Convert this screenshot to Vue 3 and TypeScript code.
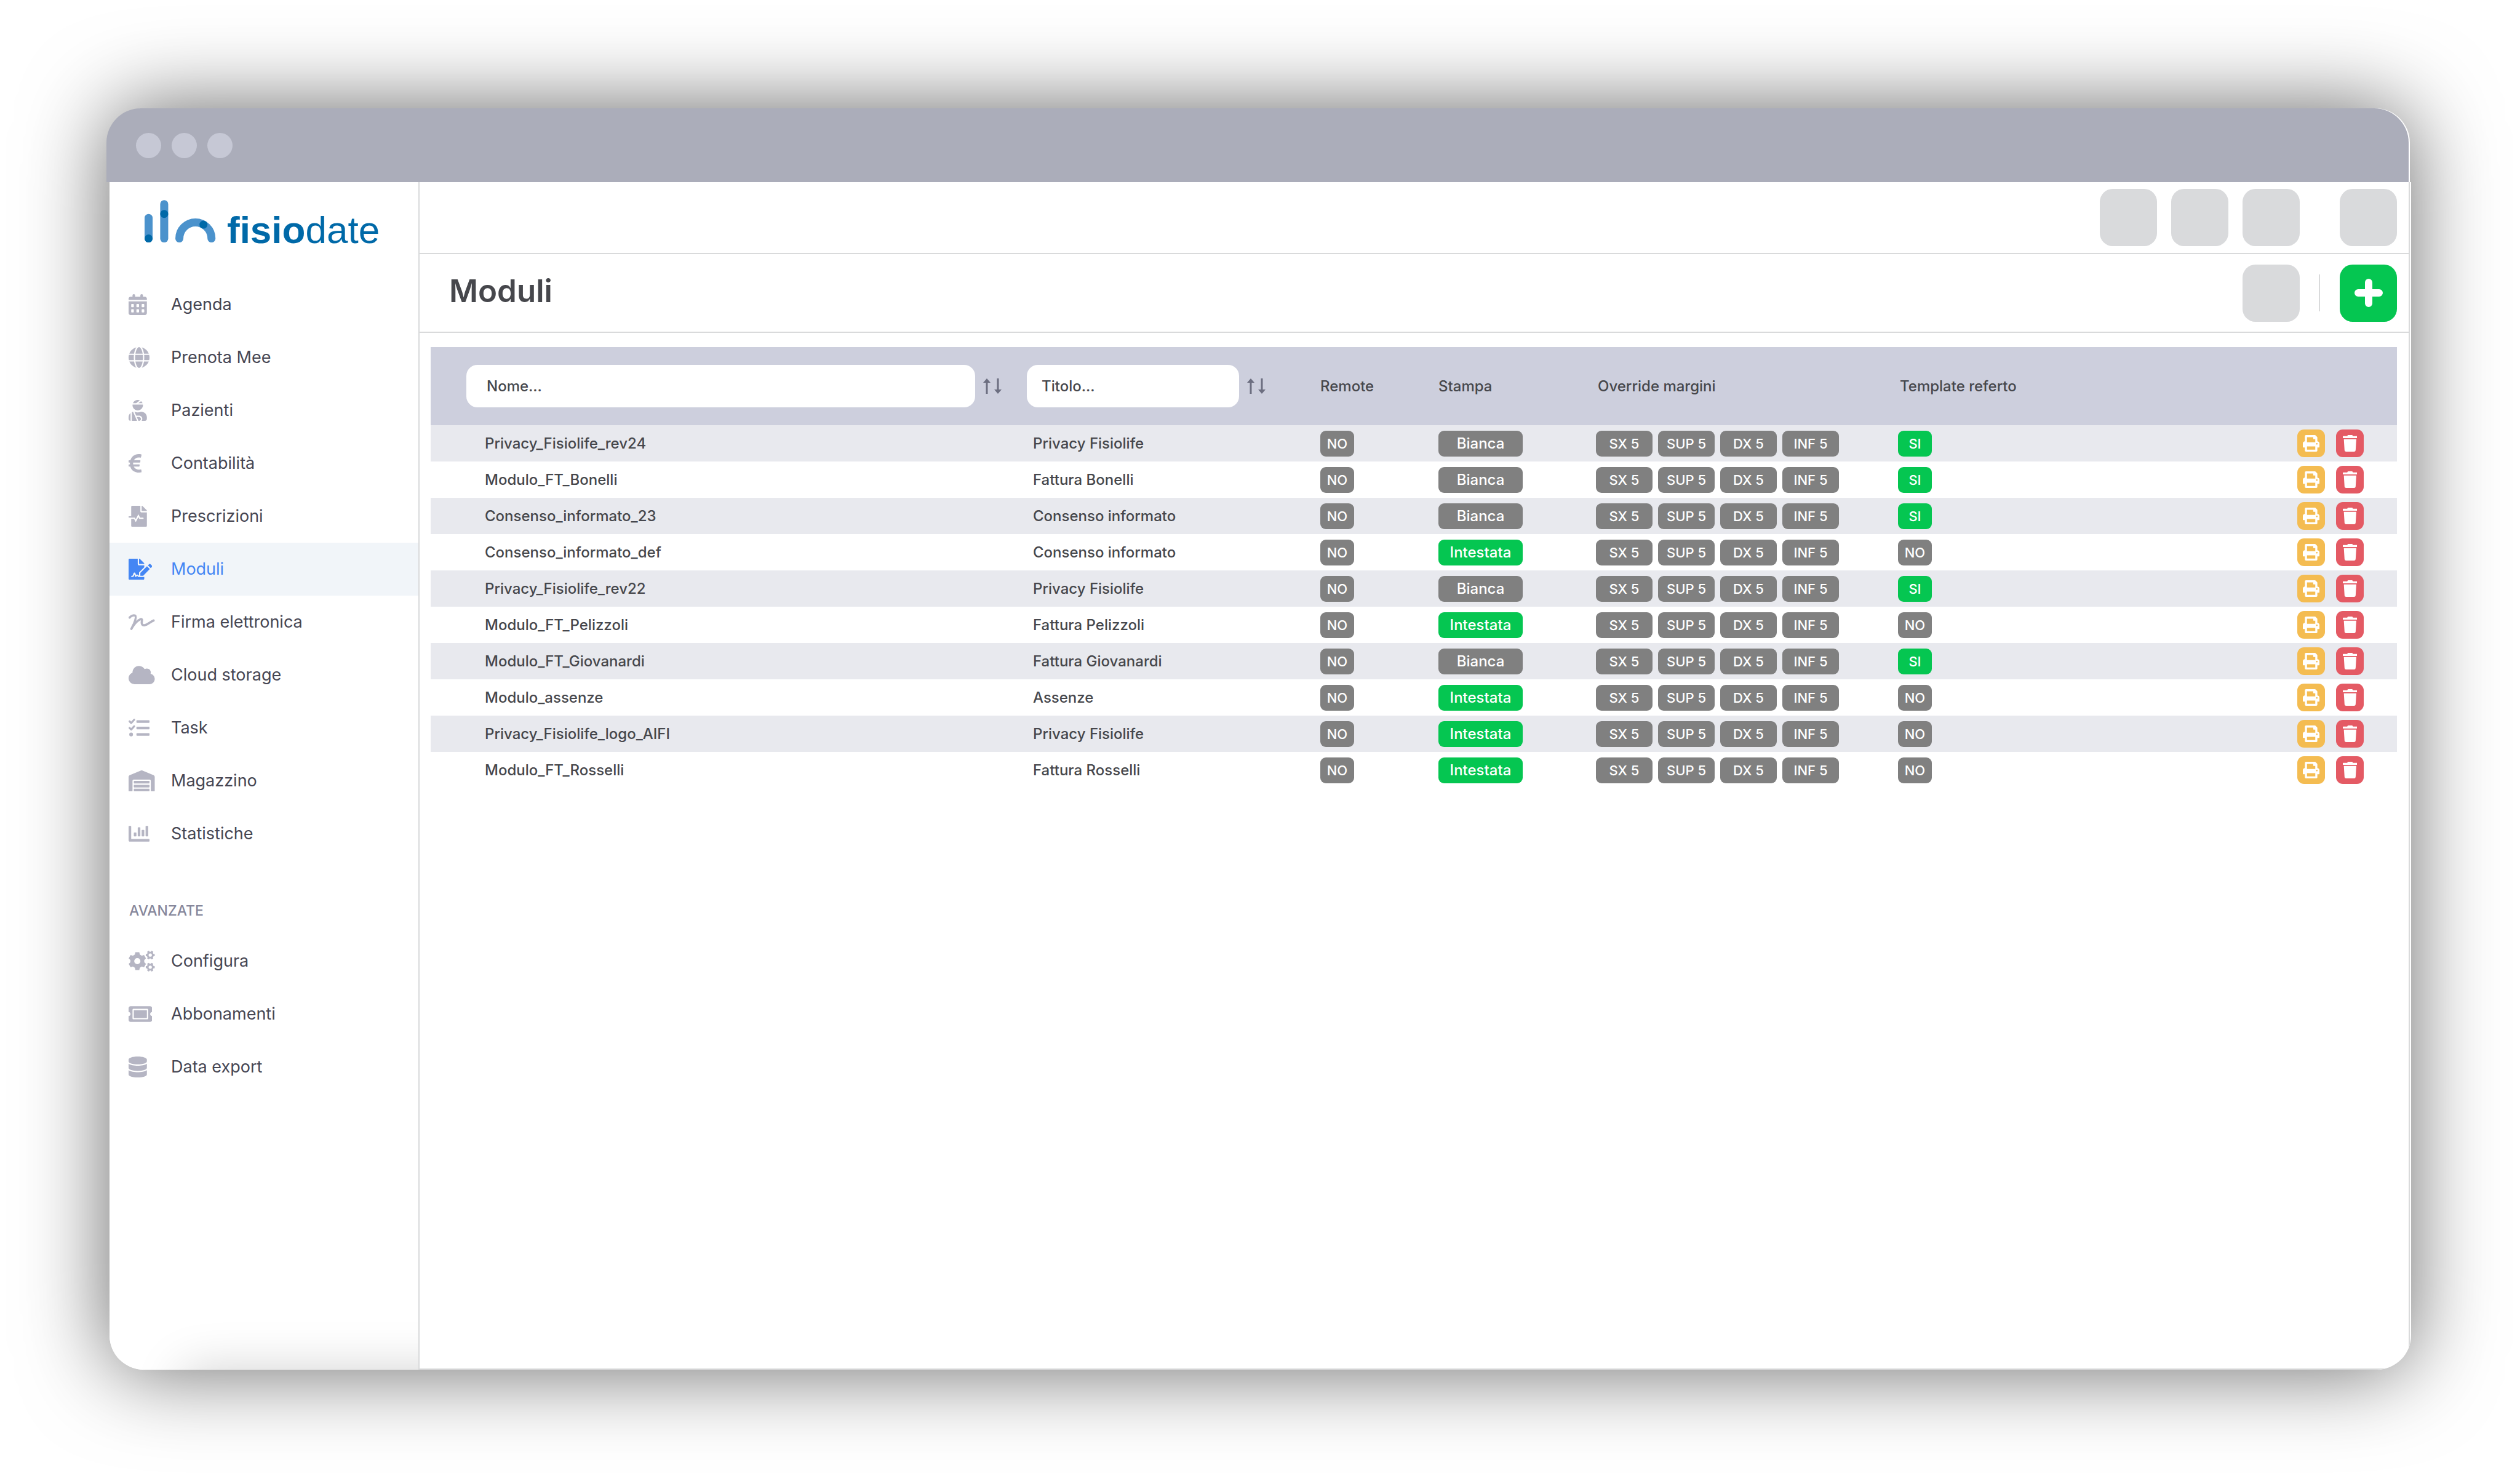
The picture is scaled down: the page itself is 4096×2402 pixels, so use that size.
<script setup lang="ts">
import { ref } from 'vue'

interface Icon {
  width: number
  path: string
  stroked?: boolean
}

interface NavItem {
  label: string
  icon: Icon
}

interface Modulo {
  nome: string
  titolo: string
  intestata: boolean
  referto: boolean
}

/** Outline of a six-toothed gear with a round hole. */
function gear(cx: number, cy: number, outer: number, inner: number, hole: number, turn: number): string {
  const points: string[] = []
  const step = Math.PI / 3
  for (let i = 0; i < 6; i++) {
    const a = turn + i * step
    const corners: [number, number][] = [
      [inner, -0.36],
      [outer, -0.22],
      [outer, 0.22],
      [inner, 0.36],
    ]
    for (const [r, d] of corners) {
      points.push(`${(cx + r * Math.cos(a + d)).toFixed(1)} ${(cy + r * Math.sin(a + d)).toFixed(1)}`)
    }
  }
  return `M${points.join('L')}ZM${cx - hole} ${cy}a${hole} ${hole} 0 1 0 ${hole * 2} 0a${hole} ${hole} 0 1 0 ${-hole * 2} 0Z`
}

const navItems: NavItem[] = [
  {
    label: 'Agenda',
    icon: {
      width: 448,
      path: 'M128 0c17.7 0 32 14.3 32 32V64H288V32c0-17.7 14.3-32 32-32s32 14.3 32 32V64h48c26.5 0 48 21.5 48 48v32H0V112C0 85.5 21.5 64 48 64H96V32c0-17.7 14.3-32 32-32zM0 176H448V464c0 26.5-21.5 48-48 48H48c-26.5 0-48-21.5-48-48V176zM64 256v48c0 8.8 7.2 16 16 16h32c8.8 0 16-7.2 16-16V256c0-8.8-7.2-16-16-16H80c-8.8 0-16 7.2-16 16zm128 0v48c0 8.8 7.2 16 16 16h32c8.8 0 16-7.2 16-16V256c0-8.8-7.2-16-16-16H208c-8.8 0-16 7.2-16 16zm128 0v48c0 8.8 7.2 16 16 16h32c8.8 0 16-7.2 16-16V256c0-8.8-7.2-16-16-16H336c-8.8 0-16 7.2-16 16zM64 384v48c0 8.8 7.2 16 16 16h32c8.8 0 16-7.2 16-16V384c0-8.8-7.2-16-16-16H80c-8.8 0-16 7.2-16 16zm128 0v48c0 8.8 7.2 16 16 16h32c8.8 0 16-7.2 16-16V384c0-8.8-7.2-16-16-16H208c-8.8 0-16 7.2-16 16zm128 0v48c0 8.8 7.2 16 16 16h32c8.8 0 16-7.2 16-16V384c0-8.8-7.2-16-16-16H336c-8.8 0-16 7.2-16 16z',
    },
  },
  {
    label: 'Prenota Mee',
    icon: {
      width: 512,
      path: 'M352 256c0 22.2-1.2 43.6-3.3 64H163.3c-2.2-20.4-3.3-41.8-3.3-64s1.2-43.6 3.3-64H348.7c2.2 20.4 3.3 41.8 3.3 64zm28.8-64H503.9c5.3 20.5 8.1 41.9 8.1 64s-2.8 43.5-8.1 64H380.8c2.1-20.6 3.2-42 3.2-64s-1.1-43.4-3.2-64zm112.6-32H376.7c-10-63.9-29.8-117.4-55.3-151.6c78.3 20.7 142 77.5 171.9 151.6zm-149.1 0H167.7c6.1-36.4 15.5-68.6 27-94.7c10.5-23.6 22.2-40.7 33.5-51.5C239.4 3.2 248.7 0 256 0s16.6 3.2 27.8 13.8c11.3 10.8 23 27.9 33.5 51.5c11.6 26 20.9 58.2 27 94.7zm-209 0H18.6C48.6 85.9 112.2 29.1 190.6 8.4C165.1 42.6 145.3 96.1 135.3 160zM8.1 192H131.2c-2.1 20.6-3.2 42-3.2 64s1.1 43.4 3.2 64H8.1C2.8 299.5 0 278.1 0 256s2.8-43.5 8.1-64zM194.7 446.6c-11.6-26-20.9-58.2-27-94.6H344.3c-6.1 36.4-15.5 68.6-27 94.6c-10.5 23.6-22.2 40.7-33.5 51.5C272.6 508.8 263.3 512 256 512s-16.6-3.2-27.8-13.8c-11.3-10.8-23-27.9-33.5-51.5zM135.3 352c10 63.9 29.8 117.4 55.3 151.6C112.2 482.9 48.6 426.1 18.6 352H135.3zm358.1 0c-30 74.1-93.6 130.9-171.9 151.6c25.5-34.2 45.2-87.7 55.3-151.6H493.4z',
    },
  },
  {
    label: 'Pazienti',
    icon: {
      width: 448,
      path: 'M277.37 11.98C261.08 4.47 243.11 0 224 0c-53.69 0-99.5 33.13-118.51 80h81.19l90.69-68.02zM342.51 80c-7.9-19.47-20.67-36.2-36.49-49.52L239.99 80h102.52zM224 256c70.69 0 128-57.31 128-128 0-5.48-.95-10.7-1.61-16H97.61c-.67 5.3-1.61 10.52-1.61 16 0 70.69 57.31 128 128 128zM80 299.7V512h128.26l-98.45-221.52A132.835 132.835 0 0 0 80 299.7zM0 464c0 26.51 21.49 48 48 48V320.24C18.88 344.89 0 381.26 0 422.4V464zm256-48h-55.38l42.67 96H256c26.47 0 48-21.53 48-48s-21.53-48-48-48zm57.6-128h-16.71c-22.24 10.18-46.88 16-72.89 16s-50.65-5.82-72.89-16h-7.37l42.67 96H256c44.11 0 80 35.89 80 80 0 18.08-6.26 34.59-16.41 48H400c26.51 0 48-21.49 48-48v-41.6c0-74.23-60.17-134.4-134.4-134.4z',
    },
  },
  {
    label: 'Contabilità',
    icon: {
      width: 320,
      path: 'M310.7 413.8c-1.3-6.3-7.6-10.3-13.8-8.8-11.5 2.7-29.4 5.9-48 5.9-56.6 0-101.5-30.4-122.3-74.9h126.2c5.6 0 10.5-3.9 11.7-9.4l6.6-30c1.7-7.5-4-14.6-11.7-14.6H112.2c-1-15.3-1-30.5 0-44h160.2c5.6 0 10.5-3.9 11.7-9.4l7-32c1.6-7.5-4.1-14.6-11.7-14.6H129.4c22.2-40.9 64.3-69.6 118.2-69.6 14.9 0 31.6 2.3 41.5 4.3 6.2 1.2 12.3-2.6 13.9-8.7l14.8-56.7c1.7-6.6-2.5-13.2-9.2-14.5-14.3-2.7-37.8-5.8-62.5-5.8C148.5 30 70.3 93 43.9 182H12c-6.6 0-12 5.4-12 12v32c0 6.6 5.4 12 12 12h21.5c-1.1 14.2-1.1 29.8 0 44H12c-6.6 0-12 5.4-12 12v30c0 6.6 5.4 12 12 12h29.1C63.5 421.6 141.1 482 246.1 482c28.4 0 52.6-4.5 66.3-7.8 6.3-1.5 10.3-7.8 8.9-14.1z',
    },
  },
  {
    label: 'Prescrizioni',
    icon: {
      width: 448,
      path: 'M288 136V0H88C74.7 0 64 10.7 64 24v232H8c-4.4 0-8 3.6-8 8v16c0 4.4 3.6 8 8 8h140.9c3 0 5.8 1.7 7.2 4.4l19.9 39.8 56.8-113.7c2.9-5.9 11.4-5.9 14.3 0l34.7 69.5H352c8.8 0 16 7.2 16 16s-7.2 16-16 16h-89.9L240 275.8l-56.8 113.7c-2.9 5.9-11.4 5.9-14.3 0L134.1 320H64v168c0 13.3 10.7 24 24 24h336c13.3 0 24-10.7 24-24V160H312c-13.2 0-24-10.8-24-24zm153-31L343.1 7c-4.5-4.5-10.6-7-17-7H320v128h128v-6.1c0-6.3-2.5-12.4-7-16.9z',
    },
  },
  {
    label: 'Moduli',
    icon: {
      width: 576,
      path: 'M218.17 424.14c-2.95-5.92-8.09-6.52-10.17-6.52s-7.22.59-10.02 6.19l-7.67 15.34c-6.37 12.78-25.03 11.37-29.48-2.09L144 386.59l-10.61 31.88c-5.89 17.66-22.38 29.53-41 29.53H80c-8.84 0-16-7.16-16-16s7.16-16 16-16h12.39c4.83 0 9.11-3.08 10.64-7.66l18.19-54.64c3.3-9.81 12.44-16.41 22.78-16.41s19.48 6.59 22.77 16.41l13.88 41.64c19.75-16.19 54.06-9.7 66 14.16 1.89 3.78 5.49 5.95 9.36 6.26v-82.12l128-127.09V160H248c-13.2 0-24-10.8-24-24V0H24C10.7 0 0 10.7 0 24v464c0 13.3 10.7 24 24 24h336c13.3 0 24-10.7 24-24v-40l-128-.11c-16.12-.31-30.58-9.28-37.83-23.75zM384 121.9c0-6.3-2.5-12.4-7-16.9L279.1 7c-4.5-4.5-10.6-7-17-7H256v128h128v-6.1zm-96 225.06V416h68.99l161.68-162.78-67.88-67.88L288 346.96zm280.54-179.63l-31.87-31.87c-9.94-9.94-26.07-9.94-36.01 0l-27.25 27.25 67.88 67.88 27.25-27.25c9.95-9.94 9.95-26.07 0-36.01z',
    },
  },
  {
    label: 'Firma elettronica',
    icon: {
      width: 640,
      stroked: true,
      path: 'M24 146C60 105 120 80 158 96C190 112 172 190 134 290L68 422C120 330 210 220 290 185C330 170 332 195 324 240C312 310 340 345 400 330C470 315 530 250 612 218',
    },
  },
  {
    label: 'Cloud storage',
    icon: {
      width: 640,
      path: 'M537.6 226.6c4.1-10.7 6.4-22.4 6.4-34.6 0-53-43-96-96-96-19.7 0-38.1 6-53.3 16.2C367 64.2 315.3 32 256 32c-88.4 0-160 71.6-160 160 0 2.7.1 5.4.2 8.1C40.2 219.8 0 273.2 0 336c0 79.5 64.5 144 144 144h368c70.7 0 128-57.3 128-128 0-61.9-44-113.6-102.4-125.4z',
    },
  },
  {
    label: 'Task',
    icon: {
      width: 512,
      path: 'M152.1 38.2c9.9 8.9 10.7 24 1.8 33.9l-72 80c-4.4 4.9-10.6 7.8-17.2 7.9s-12.9-2.4-17.6-7L7 113C-2.3 103.6-2.3 88.4 7 79s24.6-9.4 33.9 0l22.1 22.1 55.1-61.2c8.9-9.9 24-10.7 33.9-1.8zm0 160c9.9 8.9 10.7 24 1.8 33.9l-72 80c-4.4 4.9-10.6 7.8-17.2 7.9s-12.9-2.4-17.6-7L7 273c-9.4-9.4-9.4-24.6 0-33.9s24.6-9.4 33.9 0l22.1 22.1 55.1-61.2c8.9-9.9 24-10.7 33.9-1.8zM208 68h288a16 16 0 0 1 16 16v32a16 16 0 0 1-16 16H208a16 16 0 0 1-16-16V84a16 16 0 0 1 16-16zM208 226h288a16 16 0 0 1 16 16v32a16 16 0 0 1-16 16H208a16 16 0 0 1-16-16v-32a16 16 0 0 1 16-16zM208 384h288a16 16 0 0 1 16 16v32a16 16 0 0 1-16 16H208a16 16 0 0 1-16-16v-32a16 16 0 0 1 16-16zM16 416a46 46 0 1 0 92 0a46 46 0 1 0-92 0z',
    },
  },
  {
    label: 'Magazzino',
    icon: {
      width: 640,
      path: 'M504 352H136.4c-4.4 0-8 3.6-8 8l-.1 48c0 4.4 3.6 8 8 8H504c4.4 0 8-3.6 8-8v-48c0-4.4-3.6-8-8-8zm0 96H136.1c-4.4 0-8 3.6-8 8l-.1 48c0 4.4 3.6 8 8 8h368c4.4 0 8-3.6 8-8v-48c0-4.4-3.6-8-8-8zm0-192H136.6c-4.4 0-8 3.6-8 8l-.1 48c0 4.4 3.6 8 8 8H504c4.4 0 8-3.6 8-8v-48c0-4.4-3.6-8-8-8zm106.5-139L338.4 3.7a48.15 48.15 0 0 0-36.9 0L29.5 117C11.7 124.5 0 141.9 0 161.3V504c0 4.4 3.6 8 8 8h80c4.4 0 8-3.6 8-8V256c0-17.6 14.6-32 32.6-32h382.8c18 0 32.6 14.4 32.6 32v248c0 4.4 3.6 8 8 8h80c4.4 0 8-3.6 8-8V161.3c0-19.4-11.7-36.8-29.5-44.3z',
    },
  },
  {
    label: 'Statistiche',
    icon: {
      width: 512,
      path: 'M332.8 320h38.4c6.4 0 12.8-6.4 12.8-12.8V172.8c0-6.4-6.4-12.8-12.8-12.8h-38.4c-6.4 0-12.8 6.4-12.8 12.8v134.4c0 6.4 6.4 12.8 12.8 12.8zm96 0h38.4c6.4 0 12.8-6.4 12.8-12.8V76.8c0-6.4-6.4-12.8-12.8-12.8h-38.4c-6.4 0-12.8 6.4-12.8 12.8v230.4c0 6.4 6.4 12.8 12.8 12.8zm-288 0h38.4c6.4 0 12.8-6.4 12.8-12.8v-70.4c0-6.4-6.4-12.8-12.8-12.8h-38.4c-6.4 0-12.8 6.4-12.8 12.8v70.4c0 6.4 6.4 12.8 12.8 12.8zm96 0h38.4c6.4 0 12.8-6.4 12.8-12.8V108.8c0-6.4-6.4-12.8-12.8-12.8h-38.4c-6.4 0-12.8 6.4-12.8 12.8v198.4c0 6.4 6.4 12.8 12.8 12.8zM496 384H64V80c0-8.84-7.16-16-16-16H16C7.16 64 0 71.16 0 80v336c0 17.67 14.33 32 32 32h464c8.84 0 16-7.16 16-16v-32c0-8.84-7.16-16-16-16z',
    },
  },
]

const advancedItems: NavItem[] = [
  {
    label: 'Configura',
    icon: {
      width: 640,
      path:
        gear(214, 256, 222, 172, 76, Math.PI / 6) +
        gear(530, 108, 112, 84, 40, 0) +
        gear(530, 404, 112, 84, 40, 0),
    },
  },
  {
    label: 'Abbonamenti',
    icon: {
      width: 576,
      path: 'M128 160h320v192H128V160zm400 96c0 26.51 21.49 48 48 48v96c0 26.51-21.49 48-48 48H48c-26.51 0-48-21.49-48-48v-96c26.51 0 48-21.49 48-48s-21.49-48-48-48v-96c0-26.51 21.49-48 48-48h480c26.51 0 48 21.49 48 48v96c-26.51 0-48 21.49-48 48zm-48-104c0-13.255-10.745-24-24-24H120c-13.255 0-24 10.745-24 24v208c0 13.255 10.745 24 24 24h336c13.255 0 24-10.745 24-24V152z',
    },
  },
  {
    label: 'Data export',
    icon: {
      width: 448,
      path: 'M448 73.143v45.714C448 159.143 347.667 192 224 192S0 159.143 0 118.857V73.143C0 32.857 100.333 0 224 0s224 32.857 224 73.143zM448 176v102.857C448 319.143 347.667 352 224 352S0 319.143 0 278.857V176c48.125 33.143 136.208 48.572 224 48.572S399.874 209.143 448 176zm0 160v102.857C448 479.143 347.667 512 224 512S0 479.143 0 438.857V336c48.125 33.143 136.208 48.572 224 48.572S399.874 369.143 448 336z',
    },
  },
]

const sections = [
  { title: '', items: navItems },
  { title: 'AVANZATE', items: advancedItems },
]

const margins = ['SX 5', 'SUP 5', 'DX 5', 'INF 5']

const moduli: Modulo[] = [
  { nome: 'Privacy_Fisiolife_rev24', titolo: 'Privacy Fisiolife', intestata: false, referto: true },
  { nome: 'Modulo_FT_Bonelli', titolo: 'Fattura Bonelli', intestata: false, referto: true },
  { nome: 'Consenso_informato_23', titolo: 'Consenso informato', intestata: false, referto: true },
  { nome: 'Consenso_informato_def', titolo: 'Consenso informato', intestata: true, referto: false },
  { nome: 'Privacy_Fisiolife_rev22', titolo: 'Privacy Fisiolife', intestata: false, referto: true },
  { nome: 'Modulo_FT_Pelizzoli', titolo: 'Fattura Pelizzoli', intestata: true, referto: false },
  { nome: 'Modulo_FT_Giovanardi', titolo: 'Fattura Giovanardi', intestata: false, referto: true },
  { nome: 'Modulo_assenze', titolo: 'Assenze', intestata: true, referto: false },
  { nome: 'Privacy_Fisiolife_logo_AIFI', titolo: 'Privacy Fisiolife', intestata: true, referto: false },
  { nome: 'Modulo_FT_Rosselli', titolo: 'Fattura Rosselli', intestata: true, referto: false },
]

const active = ref('Moduli')
const nome = ref('')
const titolo = ref('')
</script>

<template>
  <div class="page">
    <div class="window">
      <div class="titlebar">
        <span v-for="n in 3" :key="n" class="dot"></span>
      </div>

      <div class="body">
        <aside class="sidebar">
          <a class="logo" href="#">
            <svg class="logo-mark" viewBox="323 448 160 96" aria-hidden="true">
              <g fill="none" stroke="#4b92cc" stroke-width="18" stroke-linecap="round">
                <path d="M332 488V534" />
                <path d="M367 457V534" />
                <path d="M401 534a36 36 0 0 1 72 0" />
              </g>
              <g fill="#0069a8">
                <circle cx="332" cy="534" r="9" />
                <circle cx="367" cy="479" r="9" />
                <circle cx="455" cy="503" r="9" />
              </g>
            </svg>
            <span class="logo-text"><b>fisio</b>date</span>
          </a>

          <nav>
            <template v-for="section in sections" :key="section.title">
              <h2 v-if="section.title" class="nav-heading">{{ section.title }}</h2>
              <a
                v-for="item in section.items"
                :key="item.label"
                href="#"
                class="nav-item"
                :class="{ active: item.label === active }"
                @click.prevent="active = item.label"
              >
                <span class="nav-icon">
                  <svg :viewBox="`0 0 ${item.icon.width} 512`" aria-hidden="true">
                    <path
                      v-if="item.icon.stroked"
                      :d="item.icon.path"
                      fill="none"
                      stroke="currentColor"
                      stroke-width="54"
                      stroke-linecap="round"
                      stroke-linejoin="round"
                    />
                    <path v-else :d="item.icon.path" fill="currentColor" fill-rule="evenodd" />
                  </svg>
                </span>
                {{ item.label }}
              </a>
            </template>
          </nav>
        </aside>

        <main class="main">
          <div class="topbar">
            <span class="tile"></span>
            <span class="tile"></span>
            <span class="tile"></span>
            <span class="tile profile"></span>
          </div>

          <header class="page-header">
            <h1>Moduli</h1>
            <span class="tile"></span>
            <span class="separator"></span>
            <button type="button" class="tile add" aria-label="Nuovo modulo">
              <svg viewBox="0 0 46 46" aria-hidden="true">
                <path d="M23 6V40M6 23H40" stroke="#fff" stroke-width="12" stroke-linecap="round" />
              </svg>
            </button>
          </header>

          <table class="grid">
            <colgroup>
              <col />
              <col class="col-titolo" />
              <col class="col-remote" />
              <col class="col-stampa" />
              <col class="col-margini" />
              <col class="col-referto" />
              <col class="col-azioni" />
            </colgroup>
            <thead>
              <tr>
                <th class="th-nome">
                  <div class="filter">
                    <input v-model="nome" class="wide" type="text" placeholder="Nome..." aria-label="Nome" />
                    <svg class="sort" viewBox="0 0 30 25" aria-hidden="true">
                      <path d="M6 6V25M24 0V19" stroke="currentColor" stroke-width="3" />
                      <path d="M6 0L12 7H0ZM24 25L18 18H30Z" fill="currentColor" />
                    </svg>
                  </div>
                </th>
                <th>
                  <div class="filter">
                    <input v-model="titolo" class="narrow" type="text" placeholder="Titolo..." aria-label="Titolo" />
                    <svg class="sort" viewBox="0 0 30 25" aria-hidden="true">
                      <path d="M6 6V25M24 0V19" stroke="currentColor" stroke-width="3" />
                      <path d="M6 0L12 7H0ZM24 25L18 18H30Z" fill="currentColor" />
                    </svg>
                  </div>
                </th>
                <th>Remote</th>
                <th>Stampa</th>
                <th class="inset">Override margini</th>
                <th class="inset">Template referto</th>
                <th></th>
              </tr>
            </thead>
            <tbody>
              <tr v-for="modulo in moduli" :key="modulo.nome">
                <td class="td-nome">{{ modulo.nome }}</td>
                <td class="td-titolo">{{ modulo.titolo }}</td>
                <td><div class="badges"><span class="badge small">NO</span></div></td>
                <td>
                  <div class="badges">
                    <span class="badge large" :class="{ on: modulo.intestata }">
                      {{ modulo.intestata ? 'Intestata' : 'Bianca' }}
                    </span>
                  </div>
                </td>
                <td>
                  <div class="badges">
                    <span v-for="margin in margins" :key="margin" class="badge medium">{{ margin }}</span>
                  </div>
                </td>
                <td>
                  <div class="badges">
                    <span class="badge small" :class="{ on: modulo.referto }">{{ modulo.referto ? 'SI' : 'NO' }}</span>
                  </div>
                </td>
                <td>
                  <div class="actions">
                    <button type="button" class="action print" aria-label="Stampa">
                      <svg viewBox="0 0 512 512" aria-hidden="true">
                        <path
                          fill="#fff"
                          d="M448 192V77.25c0-8.49-3.37-16.62-9.37-22.63L393.37 9.37c-6-6-14.14-9.37-22.63-9.37H96C78.33 0 64 14.33 64 32v160c-35.35 0-64 28.65-64 64v112c0 8.84 7.16 16 16 16h48v96c0 17.67 14.33 32 32 32h320c17.67 0 32-14.33 32-32v-96h48c8.84 0 16-7.16 16-16V256c0-35.35-28.65-64-64-64zm-64 256H128v-96h256v96zm0-224H128V64h192v48c0 8.84 7.16 16 16 16h48v96zm48 72c-13.25 0-24-10.75-24-24 0-13.26 10.75-24 24-24s24 10.74 24 24c0 13.25-10.75 24-24 24z"
                        />
                      </svg>
                    </button>
                    <button type="button" class="action delete" aria-label="Elimina">
                      <svg viewBox="0 0 448 512" aria-hidden="true">
                        <path
                          fill="#fff"
                          d="M432 32H312l-9.4-18.7A24 24 0 0 0 281.1 0H166.8a23.72 23.72 0 0 0-21.4 13.3L136 32H16A16 16 0 0 0 0 48v32a16 16 0 0 0 16 16h416a16 16 0 0 0 16-16V48a16 16 0 0 0-16-16zM53.2 467a48 48 0 0 0 47.9 45h245.8a48 48 0 0 0 47.9-45L416 128H32z"
                        />
                      </svg>
                    </button>
                  </div>
                </td>
              </tr>
            </tbody>
          </table>
        </main>
      </div>
    </div>
  </div>
</template>

<style>
body {
  margin: 0;
  background: #fff;
}
</style>

<style scoped>
.page,
.page * {
  box-sizing: border-box;
}

.page {
  display: flex;
  flex-direction: column;
  min-height: 100vh;
  padding: 176px 179px 176px 178px;
  font-family: Inter, "Open Sans", sans-serif;
  color: #46474c;
}

.window {
  flex: 1;
  display: flex;
  flex-direction: column;
  border-radius: 56px;
  background: #fff;
  box-shadow: 0 0 140px rgba(0, 0, 0, 0.6);
}

.titlebar {
  display: flex;
  align-items: center;
  gap: 17px;
  height: 120px;
  margin: 0 2px 0 -5px;
  padding-left: 48px;
  border-radius: 56px 56px 0 0;
  background: #abadba;
}

.dot {
  width: 41px;
  height: 41px;
  border-radius: 50%;
  background: #c6c8d5;
}

.body {
  flex: 1;
  display: flex;
  margin-right: -2px;
  border-radius: 0 0 56px 56px;
  overflow: hidden;
  background: #fff;
}

/* Sidebar */
.sidebar {
  position: relative;
  flex: none;
  width: 504px;
  border-right: 2px solid #d9dadb;
  overflow: hidden;
}

.sidebar::after {
  content: "";
  position: absolute;
  left: 120px;
  right: -200px;
  bottom: -100px;
  height: 100px;
  box-shadow: 0 0 80px rgba(0, 0, 0, 0.18);
}

.logo {
  display: flex;
  align-items: baseline;
  gap: 18px;
  height: 156px;
  padding: 29px 0 0 57px;
  color: #0069a8;
  text-decoration: none;
}

.logo-mark {
  width: 116px;
  height: 70px;
}

.logo-text {
  font: 62px/62px "Liberation Sans", sans-serif;
}

.nav-item {
  display: flex;
  align-items: center;
  height: 86px;
  padding-left: 31px;
  font-size: 27px;
  line-height: 34px;
  color: #464653;
  text-decoration: none;
}

.nav-icon {
  display: flex;
  flex: none;
  width: 69px;
  color: #b5b5c3;
}

.nav-icon svg {
  height: 34px;
}

.nav-item.active {
  background: #f1f5f9;
  color: #4486f4;
}

.nav-item.active .nav-icon {
  color: inherit;
}

.nav-heading {
  margin: 0;
  padding: 43px 0 0 32px;
  font-size: 23px;
  font-weight: 500;
  line-height: 78px;
  color: #86879b;
}

/* Main column */
.main {
  flex: 1;
  min-width: 0;
  margin-right: 2px;
  border-right: 2px solid #d9dadb;
  border-bottom: 2px solid #d9dadb;
}

.topbar,
.page-header {
  display: flex;
  align-items: center;
  border-bottom: 2px solid #d9dadb;
}

.topbar {
  justify-content: flex-end;
  gap: 23px;
  height: 117px;
  padding-right: 19px;
}

.page-header {
  height: 128px;
  padding: 0 19px 0 48px;
}

.page-header h1 {
  flex: 1;
  margin: 0;
  padding-bottom: 6px;
  font-size: 51px;
  font-weight: 600;
  line-height: 60px;
}

.tile {
  flex: none;
  width: 93px;
  height: 93px;
  border-radius: 21px;
  background: #d9dadc;
}

.profile {
  margin-left: 42px;
}

.separator {
  width: 2px;
  height: 60px;
  margin: 0 32px 0 31px;
  background: #d9dadb;
}

.add {
  display: flex;
  align-items: center;
  justify-content: center;
  padding: 0;
  border: 0;
  background: #05c651;
}

.add svg {
  width: 46px;
  height: 46px;
}

/* Table */
.grid {
  width: calc(100% - 37px);
  margin: 23px 19px 0 18px;
  border-collapse: collapse;
  table-layout: fixed;
  font-size: 24px;
  line-height: 30px;
}

.col-titolo {
  width: 477px;
}

.col-remote {
  width: 192px;
}

.col-stampa {
  width: 256px;
}

.col-margini {
  width: 491px;
}

.col-referto {
  width: 611px;
}

.col-azioni {
  width: 200px;
}

.grid th,
.grid td {
  padding: 0;
  text-align: left;
  font-weight: 500;
  white-space: nowrap;
}

.grid thead tr {
  height: 127px;
  background: #cdcfdd;
}

.grid tbody tr {
  height: 59px;
}

.grid tbody tr:nth-child(odd) {
  background: #e8e9ee;
}

.grid .th-nome {
  padding-left: 58px;
}

.grid .inset {
  padding-left: 3px;
}

.grid .td-nome {
  padding-left: 88px;
}

.grid .td-titolo {
  padding-left: 10px;
}

.filter {
  display: flex;
  align-items: center;
  gap: 13px;
}

.filter input {
  height: 69px;
  border: 0;
  border-radius: 18px;
  background: #fff;
  font: inherit;
  color: inherit;
}

.filter input::placeholder {
  color: inherit;
  opacity: 1;
}

.filter .wide {
  flex: 1;
  min-width: 0;
  padding: 0 33px;
}

.filter .narrow {
  width: 345px;
  padding: 0 24px;
}

.sort {
  flex: none;
  width: 30px;
  height: 25px;
  color: #6c6e80;
}

.wide + .sort {
  margin-right: 41px;
}

.badges {
  display: flex;
  gap: 9px;
}

.badge {
  height: 42px;
  border-radius: 9px;
  background: #808080;
  color: #fff;
  font-size: 22px;
  line-height: 42px;
  text-align: center;
}

.badge.on {
  background: #05c651;
}

.small {
  width: 55px;
}

.medium {
  width: 92px;
}

.large {
  width: 137px;
  font-size: 24px;
}

.actions {
  display: flex;
  justify-content: flex-end;
  gap: 18px;
  padding-right: 54px;
}

.action {
  display: flex;
  align-items: center;
  justify-content: center;
  width: 45px;
  height: 45px;
  padding: 0;
  border: 0;
  border-radius: 11px;
}

.action svg {
  height: 27px;
}

.print {
  background: #f4bc51;
}

.delete {
  background: #e45a64;
}
</style>
